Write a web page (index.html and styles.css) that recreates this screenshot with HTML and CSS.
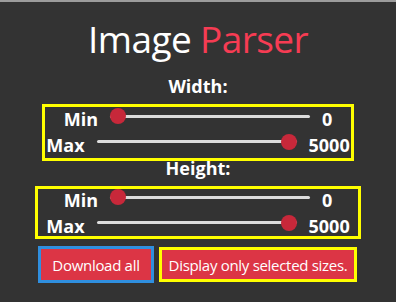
FILE: index.html
```html
<!DOCTYPE html>
<html lang="en">
<head>
<meta charset="utf-8">
<title>Image Parser</title>
<link rel="stylesheet" href="styles.css">
</head>
<body>
<main class="app">
  <h1 class="title">Image <span class="accent">Parser</span></h1>

  <div class="group-label">Width:</div>
  <div class="box box-width">
    <div class="row">
      <span class="lbl">Min</span>
      <input class="slider" type="range" min="0" max="5000" value="0">
      <span class="val">0</span>
    </div>
    <div class="row">
      <span class="lbl">Max</span>
      <input class="slider" type="range" min="0" max="5000" value="5000">
      <span class="val">5000</span>
    </div>
  </div>

  <div class="group-label group-label-height">Height:</div>
  <div class="box box-height">
    <div class="row">
      <span class="lbl">Min</span>
      <input class="slider" type="range" min="0" max="5000" value="0">
      <span class="val">0</span>
    </div>
    <div class="row">
      <span class="lbl">Max</span>
      <input class="slider" type="range" min="0" max="5000" value="5000">
      <span class="val">5000</span>
    </div>
  </div>

  <div class="actions">
    <button class="btn btn-download" type="button">Download all</button>
    <button class="btn btn-display" type="button">Display only selected sizes.</button>
  </div>
</main>
</body>
</html>
```
FILE: styles.css
```css
html, body {
  margin: 0;
  padding: 0;
}

body {
  background: #333333;
  border-top: 2px solid #9c9c9c;
  height: 300px;
  overflow: hidden;
  font-family: "Open Sans", "Noto Sans", sans-serif;
  color: #ffffff;
}

.app {
  display: flex;
  flex-direction: column;
  align-items: center;
}

.title {
  margin: 15px 0 0;
  font-size: 37px;
  line-height: 44px;
  font-weight: 500;
  letter-spacing: -0.6px;
  text-align: center;
}

.accent {
  color: #f63c53;
}

.group-label {
  margin-top: 16px;
  font-size: 18px;
  line-height: 18px;
  font-weight: 700;
  text-align: center;
}

.group-label-height {
  margin-top: -2px;
}

.box {
  box-sizing: border-box;
  border: 3px solid #ffff00;
  margin-top: 9px;
}

.box-width {
  width: 312px;
  height: 57px;
}

.box-height {
  width: 326px;
  height: 53px;
}

.box-height .row:first-child {
  margin-top: -1px;
}

.row {
  display: flex;
  justify-content: center;
  align-items: flex-start;
  gap: 12px;
  height: 25.5px;
  font-size: 18px;
  line-height: 25.5px;
  font-weight: 700;
}

.slider {
  -webkit-appearance: none;
  appearance: none;
  width: 200px;
  height: 16px;
  margin: 1px 0 0;
  padding: 0;
  background: transparent;
}

.slider::-webkit-slider-runnable-track {
  height: 3px;
  background: #dcdcdc;
  border-radius: 2px;
}

.slider::-webkit-slider-thumb {
  -webkit-appearance: none;
  appearance: none;
  width: 16px;
  height: 16px;
  margin-top: -6.5px;
  border-radius: 50%;
  background: #c7283a;
  border: none;
}

.actions {
  display: flex;
  align-items: center;
  gap: 5px;
  margin-top: 7px;
  margin-left: -1px;
}

.btn {
  box-sizing: border-box;
  background: #dc3545;
  color: #ffffff;
  font-family: "Open Sans", "Noto Sans", sans-serif;
  font-size: 15px;
  letter-spacing: -0.3px;
  line-height: 20px;
  padding: 0;
  text-align: center;
  cursor: pointer;
}

.btn-download {
  width: 116px;
  height: 37px;
  border: 3px solid #2f8fdf;
}

.btn-display {
  width: 198px;
  height: 35px;
  border: 3px solid #ffff00;
}
```
